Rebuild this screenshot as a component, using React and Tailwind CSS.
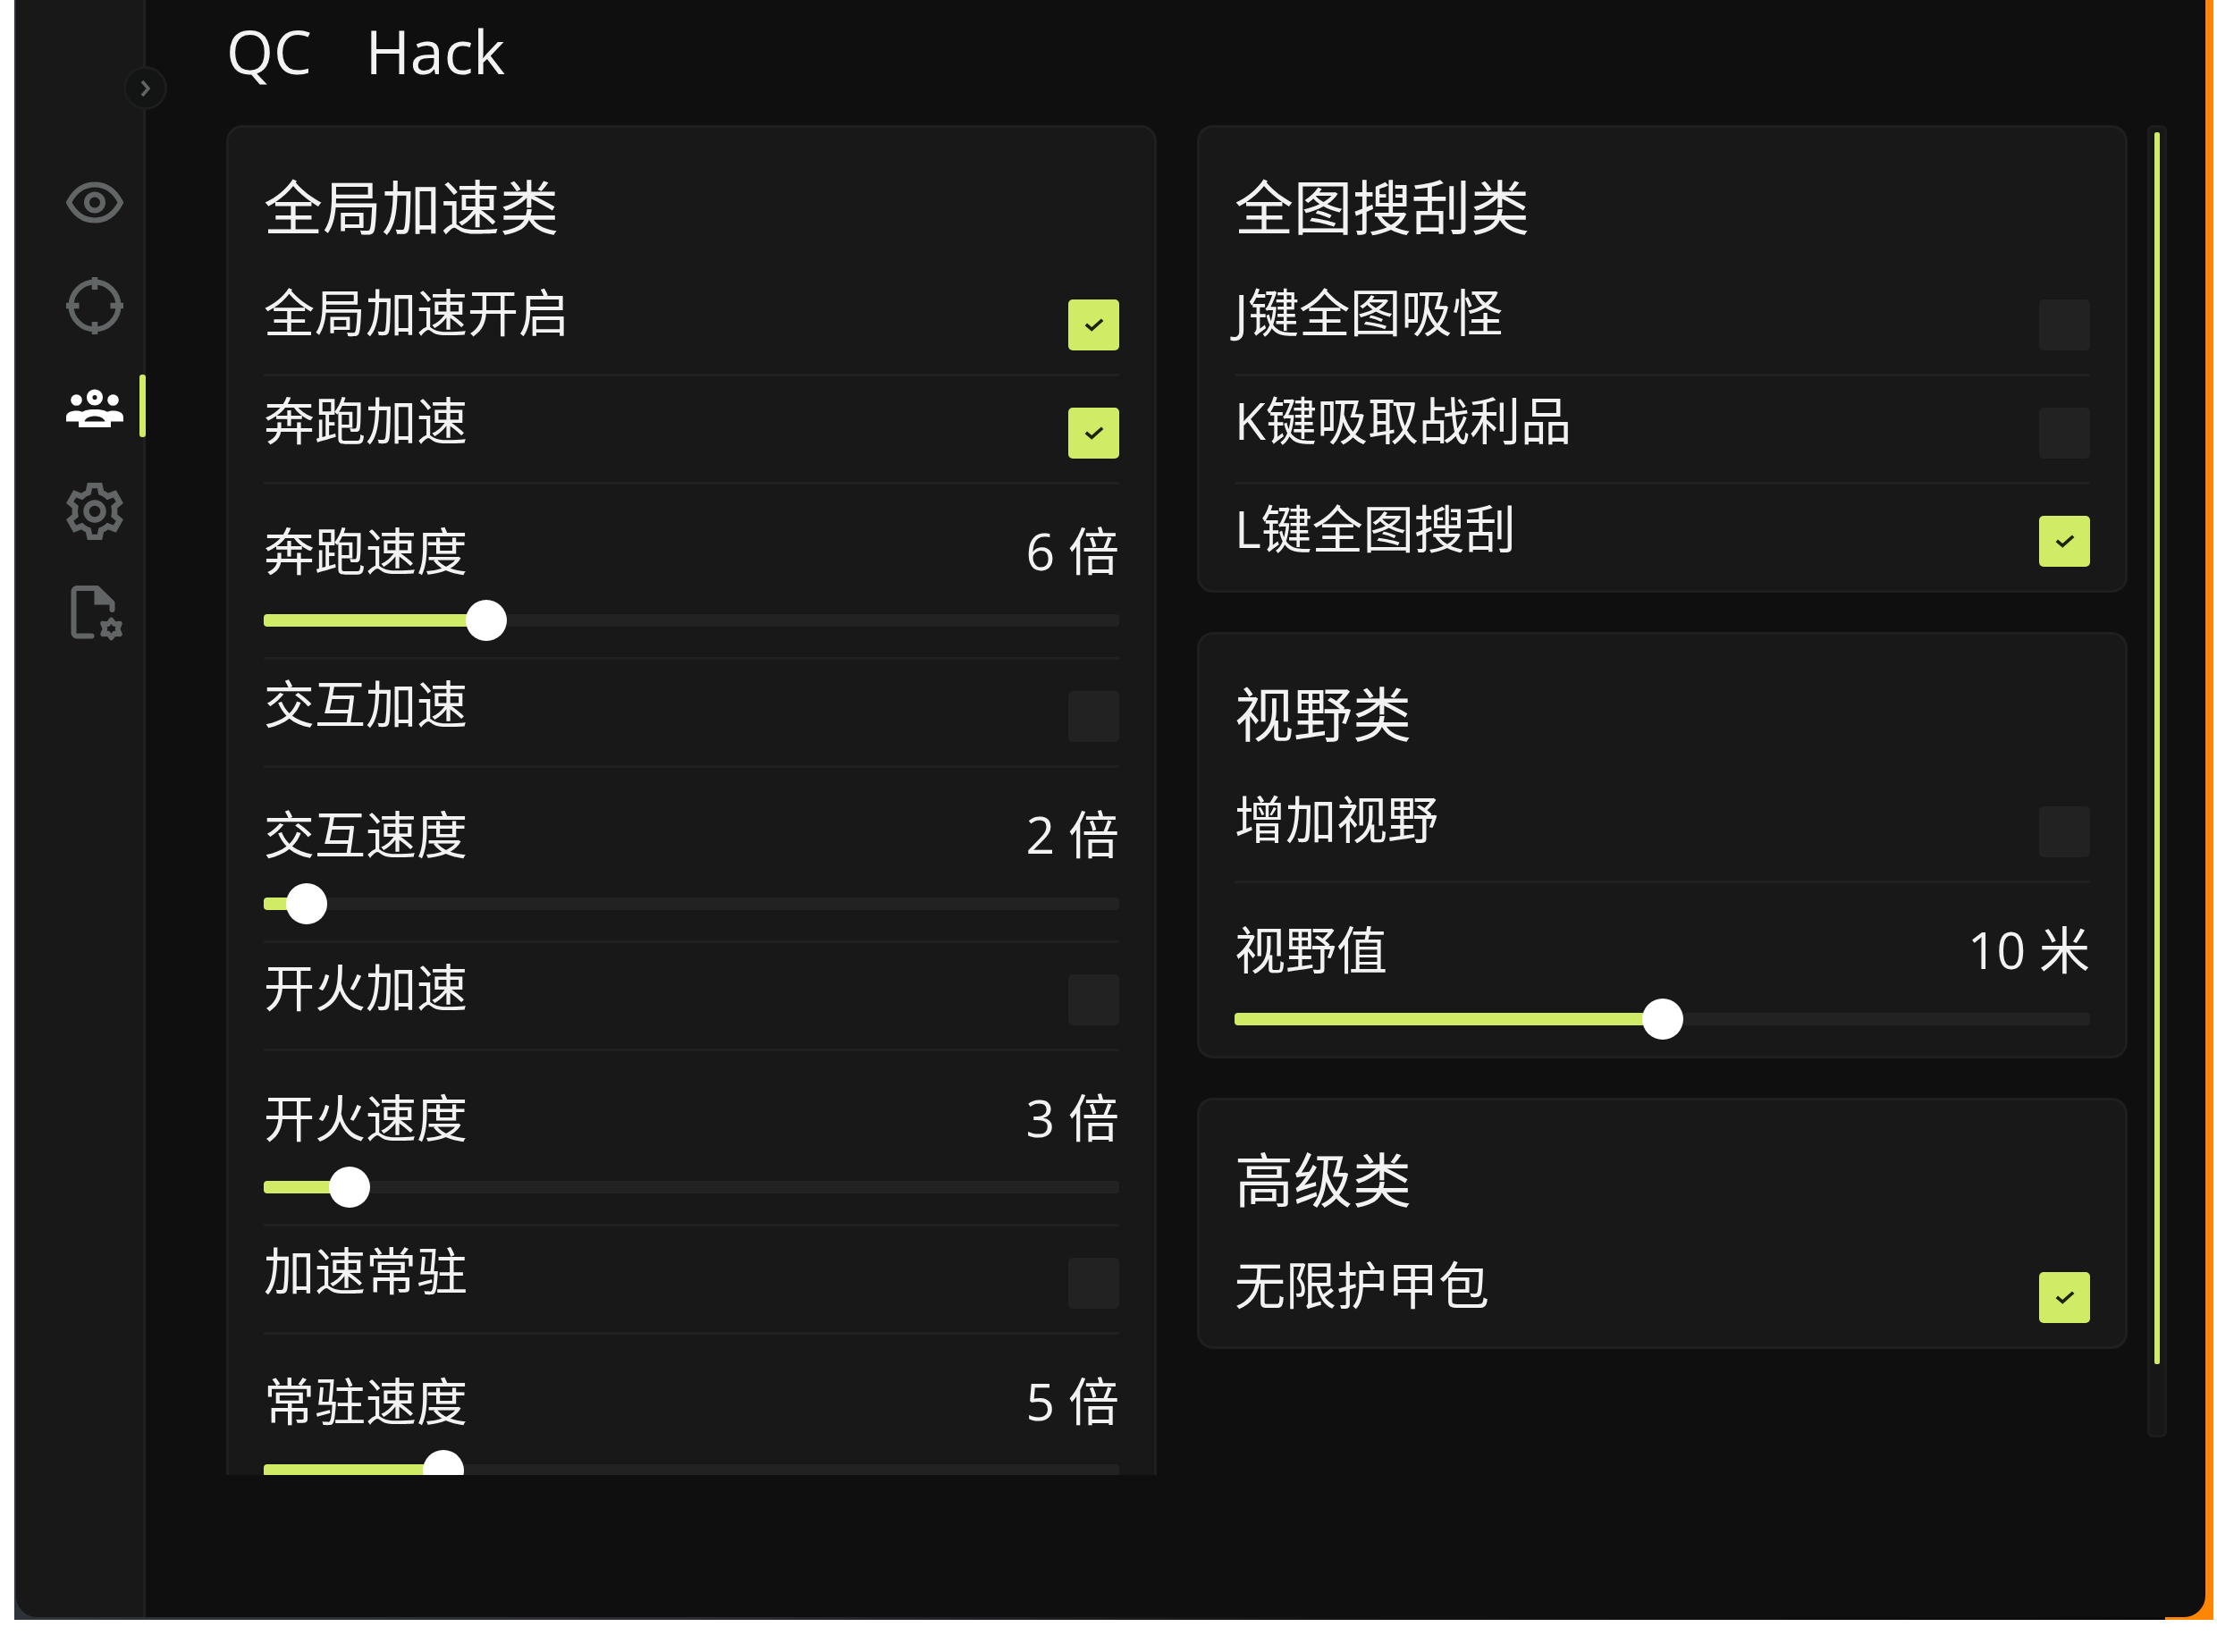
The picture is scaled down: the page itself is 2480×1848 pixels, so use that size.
import React, { useId, useState } from 'react';
import clsx from 'clsx';

/* ─── Sidebar icons ─── */
const EyeIcon = () => (
  <svg viewBox="0 0 64 64" fill="none" stroke="currentColor" strokeWidth="6" strokeLinejoin="round" className="size-16">
    <path d="M3 31.500C10 18 20 11.500 32 11.500S54 18 61 31.500C54 45 44 51.500 32 51.500S10 45 3 31.500Z" />
    <circle cx="32" cy="31.500" r="9" />
  </svg>
);

const CrosshairIcon = () => (
  <svg viewBox="0 0 64 64" fill="none" stroke="currentColor" strokeWidth="6" className="size-16">
    <circle cx="32" cy="32" r="26.500" />
    <path d="M32 0v14M32 50v14M0 32h14.500M49.500 32H64" strokeWidth="6.500" />
  </svg>
);

const TeamIcon = () => (
  <svg viewBox="0 0 64 64" fill="currentColor" className="size-16">
    <circle cx="11.500" cy="22.500" r="6.300" />
    <circle cx="52.500" cy="22.500" r="6.300" />
    <circle cx="32" cy="19.500" r="5.800" fill="none" stroke="currentColor" strokeWidth="6.500" />
    <path
      fillRule="evenodd"
      d="M0 46.500v-5C0 37 5 34.500 11.500 34.500c2.500 0 4.500.3 6.500 1.200C22 33.500 27 33 32 33s10 .5 14 2.700c2-.9 4-1.200 6.500-1.200C59 34.500 64 37 64 41.500v5H50v6.500H14v-6.500ZM20.500 46.500h23C42.500 42.500 37 40.500 32 40.500s-10.500 2-11.500 6Z"
    />
  </svg>
);

const GearIcon = () => (
  <svg viewBox="0 0 64 64" fill="none" stroke="currentColor" strokeWidth="6.500" className="size-16">
    <path d="M26.500 3h11l1.700 8a22 22 0 0 1 7.300 4.400l7.800-3 5.500 9.600-6.100 5.300a22 22 0 0 1 0 9.400l6.100 5.300-5.500 9.600-7.800-3a22 22 0 0 1-7.300 4.400l-1.700 8h-11l-1.700-8a22 22 0 0 1-7.300-4.400l-7.800 3L4.200 42l6.100-5.300a22 22 0 0 1 0-9.400L4.200 22l5.500-9.600 7.800 3a22 22 0 0 1 7.300-4.400Z" />
    <circle cx="32" cy="32" r="9.500" />
  </svg>
);

const FileGearIcon = () => (
  <svg viewBox="0 0 64 64" fill="none" stroke="currentColor" strokeWidth="6" className="size-16">
    <path d="M28.500 56.500H12a3.500 3.500 0 0 1-3.500-3.500V6.500A3.500 3.500 0 0 1 12 3h22.500L51.500 19.500V27" strokeLinecap="round" strokeLinejoin="round" />
    <path d="M31.500 3v18.500h20Z" fill="currentColor" stroke="none" />
    <path
      d="M50.500 38.500l3.500 4.700 6-.8-2.500 6 2.500 6-6-.8-3.500 4.900-3.500-4.900-6 .8 2.500-6-2.500-6 6 .8Z"
      strokeWidth="5.500"
      strokeLinejoin="round"
    />
  </svg>
);

const NAV = [
  { key: 'visual', label: '视觉', Icon: EyeIcon },
  { key: 'aim', label: '瞄准', Icon: CrosshairIcon },
  { key: 'players', label: '玩家', Icon: TeamIcon },
  { key: 'settings', label: '设置', Icon: GearIcon },
  { key: 'config', label: '配置', Icon: FileGearIcon },
];

/* ─── Panel data ─── */
const LEFT = [
  {
    title: '全局加速类',
    rows: [
      { type: 'check', label: '全局加速开启', on: true },
      { type: 'check', label: '奔跑加速', on: true },
      { type: 'range', label: '奔跑速度', value: 5.95, min: 1, max: 20, unit: '倍' },
      { type: 'check', label: '交互加速', on: false },
      { type: 'range', label: '交互速度', value: 1.95, min: 1, max: 20, unit: '倍' },
      { type: 'check', label: '开火加速', on: false },
      { type: 'range', label: '开火速度', value: 2.9, min: 1, max: 20, unit: '倍' },
      { type: 'check', label: '加速常驻', on: false },
      { type: 'range', label: '常驻速度', value: 5, min: 1, max: 20, unit: '倍' },
    ],
  },
];

const RIGHT = [
  {
    title: '全图搜刮类',
    rows: [
      { type: 'check', label: 'J键全图吸怪', on: false },
      { type: 'check', label: 'K键吸取战利品', on: false },
      { type: 'check', label: 'L键全图搜刮', on: true },
    ],
  },
  {
    title: '视野类',
    rows: [
      { type: 'check', label: '增加视野', on: false },
      { type: 'range', label: '视野值', value: 10, min: 0, max: 20, unit: '米' },
    ],
  },
  {
    title: '高级类',
    rows: [{ type: 'check', label: '无限护甲包', on: true }],
  },
];

const CheckRow = ({ label, on }) => {
  const id = useId();
  const [checked, setChecked] = useState(on);

  return (
    <div className="flex items-end justify-between border-[#202020] pt-4 pb-[26px] not-last:border-b-3">
      <label htmlFor={id} className="self-start pb-[10px] text-[57px] leading-[66px]">{label}</label>
      <span className="grid size-[57px] place-items-center">
        <input
          id={id}
          type="checkbox"
          checked={checked}
          onChange={(e) => setChecked(e.target.checked)}
          className="col-start-1 row-start-1 size-full appearance-none rounded-[5px] bg-[#222222] checked:bg-[#d0ec66]"
        />
        {checked && (
          <svg viewBox="0 0 24 18" fill="none" stroke="#1c2408" strokeWidth="4" className="pointer-events-none col-start-1 row-start-1 w-[22px]">
            <path d="M2 8.500l7 6L22 3" />
          </svg>
        )}
      </span>
    </div>
  );
};

const RangeRow = ({ label, value, min, max, unit }) => {
  const id = useId();
  const [current, setCurrent] = useState(value);
  const percent = ((current - min) / (max - min)) * 100;

  return (
    <div className="border-[#202020] pt-[41px] pb-[18px] not-last:border-b-3">
      <div className="mb-[22px] flex justify-between text-[57px] leading-[66px]">
        <label htmlFor={id}>{label}</label>
        <output htmlFor={id}>{Math.round(current)} {unit}</output>
      </div>
      <div className="grid h-[46px] items-center">
        <div className="col-start-1 row-start-1 h-[14px] overflow-hidden rounded-[4px] bg-[#222222]">
          <div className="h-full bg-[#d0ec66]" style={{ width: `${percent}%` }} />
        </div>
        {/* wider than the track by one thumb, so the thumb centre reaches both ends */}
        <input
          id={id}
          type="range"
          min={min}
          max={max}
          step={0.05}
          value={current}
          onChange={(e) => setCurrent(Number(e.target.value))}
          className="col-start-1 row-start-1 -mx-[23px] h-[46px] appearance-none bg-transparent [&::-webkit-slider-thumb]:size-[46px] [&::-webkit-slider-thumb]:appearance-none [&::-webkit-slider-thumb]:rounded-full [&::-webkit-slider-thumb]:bg-white"
        />
      </div>
    </div>
  );
};

const Card = ({ title, rows }) => (
  <section className="rounded-[18px] border-3 border-[#1f1f1f] bg-[#181818] px-[39px] pt-12">
    <h2 className="mb-[29px] text-[66px] leading-[80px]">{title}</h2>
    <div>
      {rows.map((row) =>
        row.type === 'check' ? <CheckRow key={row.label} {...row} /> : <RangeRow key={row.label} {...row} />
      )}
    </div>
  </section>
);

const Sidebar = () => {
  const [active, setActive] = useState('players');

  return (
    <aside className="relative w-[145px] shrink-0 border-r-3 border-[#202020] bg-[#181818] pt-[195px]">
      <button
        aria-label="展开"
        className="absolute top-[74px] -right-[27px] flex size-[49px] items-center justify-center rounded-full border-3 border-[#1d1d1d] bg-[#131515] text-[#626464]"
      >
        <svg viewBox="0 0 12 20" fill="none" stroke="currentColor" strokeWidth="3.500" className="w-3">
          <path d="M2 2l7 8-7 8" />
        </svg>
      </button>
      <nav className="flex flex-col gap-[51px]">
        {NAV.map(({ key, label, Icon }) => (
          <button
            key={key}
            aria-label={label}
            onClick={() => setActive(key)}
            className={clsx('relative pl-14', active === key ? 'text-white' : 'text-[#626565]')}
          >
            <Icon />
            {active === key && <span className="absolute -top-[6px] -right-[3px] h-[70px] w-[7px] rounded-[3px] bg-[#d0ec66]" />}
          </button>
        ))}
      </nav>
    </aside>
  );
};

const App = () => (
  <div className="h-screen bg-white pr-1 pb-9 pl-4">
    <div className="h-full bg-[linear-gradient(to_right,#2c3238_0,#2c2c34_30%,#121212_60%,#0a0a0a_calc(100%_-_54px),#ff8604_calc(100%_-_54px))] pr-[9px] pb-[3px] pl-0.5">
      <div className="flex h-full overflow-hidden rounded-b-3xl bg-[#0f0f0f] font-['Open_Sans','Noto_Sans_CJK_SC',sans-serif] text-[#f2f2f2]">
        <Sidebar />
        <main className="flex min-w-0 flex-1 flex-col pr-[43px] pb-[159px] pl-[90px]">
          <h1 className="flex gap-[60px] pt-3 pb-[38px] text-[68px] leading-[90px]">
            <span>QC</span>
            <span>Hack</span>
          </h1>
          <div className="flex min-h-0 flex-1 gap-[22px]">
            <div className="grid min-w-0 flex-1 grid-cols-2 items-start gap-[45px] overflow-hidden">
              <div className="flex flex-col gap-11">
                {LEFT.map((card) => <Card key={card.title} {...card} />)}
              </div>
              <div className="flex flex-col gap-11">
                {RIGHT.map((card) => <Card key={card.title} {...card} />)}
              </div>
            </div>
            {/* scroll indicator */}
            <div className="mb-[42px] flex w-[22px] justify-center rounded-[6px] border-3 border-[#1c1c1c] bg-[#171717] pt-[5px]">
              <div className="h-[95%] max-h-[1378px] w-[6px] rounded-[2px] bg-[#d0ec66]" />
            </div>
          </div>
        </main>
      </div>
    </div>
  </div>
);

export default App;
